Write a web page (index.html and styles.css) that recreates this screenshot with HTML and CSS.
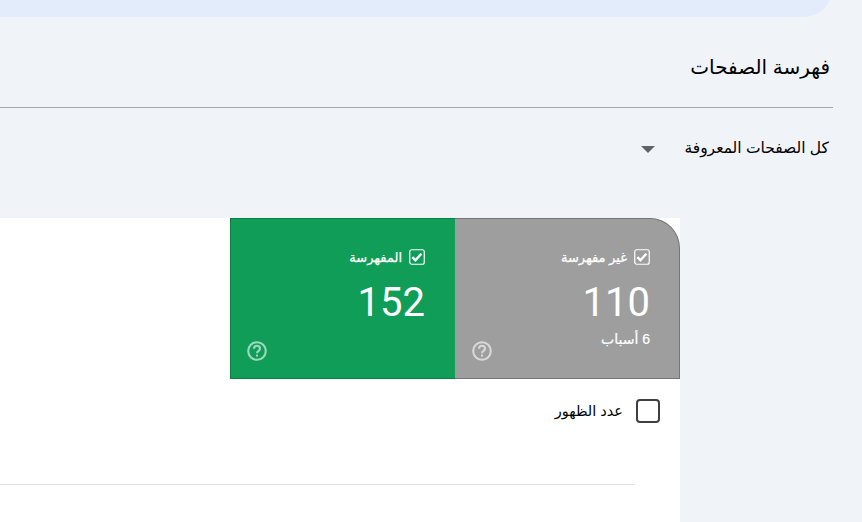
FILE: index.html
```html
<!DOCTYPE html>
<html lang="ar" dir="rtl">
<head>
  <meta charset="UTF-8">
  <meta name="viewport" content="width=device-width, initial-scale=1.0">
  <title>فهرسة الصفحات</title>
  <link rel="stylesheet" href="styles.css">
</head>
<body>

  <div class="page">
    <div class="banner"></div>

    <h1 class="title">فهرسة الصفحات</h1>

    <div class="filter">
      <span class="filter-label">كل الصفحات المعروفة</span>
      <span class="filter-arrow"></span>
    </div>

    <section class="card">
      <div class="tabs">
        <div class="tab tab-gray">
          <div class="tab-head">
            <svg class="tick" viewBox="0 0 16 16"><rect x="0.75" y="0.75" width="14.5" height="14.5" rx="2" fill="none" stroke="currentColor" stroke-width="1.2"/><path d="M3.4 8.2l3 3 6-6.4" fill="none" stroke="currentColor" stroke-width="2.4"/></svg>
            <span>غير مفهرسة</span>
          </div>
          <div class="tab-num">110</div>
          <div class="tab-sub">6 أسباب</div>
          <svg class="help" viewBox="0 0 20 20"><circle cx="10" cy="10" r="8.8" fill="none" stroke="currentColor" stroke-width="2.1"/><path d="M7 7.8a3 3 0 0 1 6 0c0 2-3 2.2-3 4.4" fill="none" stroke="currentColor" stroke-width="2.1"/><rect x="9" y="13.6" width="2" height="2" fill="currentColor"/></svg>
        </div>
        <div class="tab tab-green">
          <div class="tab-head">
            <svg class="tick" viewBox="0 0 16 16"><rect x="0.75" y="0.75" width="14.5" height="14.5" rx="2" fill="none" stroke="currentColor" stroke-width="1.2"/><path d="M3.4 8.2l3 3 6-6.4" fill="none" stroke="currentColor" stroke-width="2.4"/></svg>
            <span>المفهرسة</span>
          </div>
          <div class="tab-num">152</div>
          <svg class="help" viewBox="0 0 20 20"><circle cx="10" cy="10" r="8.8" fill="none" stroke="currentColor" stroke-width="2.1"/><path d="M7 7.8a3 3 0 0 1 6 0c0 2-3 2.2-3 4.4" fill="none" stroke="currentColor" stroke-width="2.1"/><rect x="9" y="13.6" width="2" height="2" fill="currentColor"/></svg>
        </div>
      </div>

      <div class="metric">
        <span class="box"></span>
        <span class="metric-label">عدد الظهور</span>
      </div>
      <div class="rule"></div>
    </section>
  </div>

</body>
</html>
```

FILE: styles.css
```css
* { margin: 0; padding: 0; box-sizing: border-box; }

body {
  font-family: "Liberation Sans", "DejaVu Sans", sans-serif;
  width: 862px;
  height: 522px;
  background: #f0f4f9;
  color: #000;
  overflow: hidden;
}

.page {
  display: flex;
  flex-direction: column;
  height: 522px;
}

.banner {
  width: 832px;
  height: 28px;
  margin-top: -11px;
  margin-right: 30px;
  background: #e3ecfb;
  border-bottom-right-radius: 28px;
  flex: none;
}

.title {
  width: 833px;
  height: 91px;
  margin-right: 29px;
  padding: 36px 3px 0 0;
  font-size: 20px;
  line-height: 28px;
  font-weight: 400;
  border-bottom: 1px solid #a8a8a8;
  flex: none;
}

.filter {
  display: flex;
  align-items: center;
  height: 20px;
  margin-top: 29px;
  margin-right: 33px;
  flex: none;
}

.filter-label {
  width: 174px;
  padding-top: 1px;
  font-size: 15.5px;
  line-height: 20px;
  white-space: nowrap;
}

.filter-arrow {
  width: 0;
  height: 0;
  border-left: 7px solid transparent;
  border-right: 7px solid transparent;
  border-top: 7px solid #5f6368;
  margin-top: 4px;
}

.card {
  width: 680px;
  height: 304px;
  margin-top: 61px;
  margin-right: 182px;
  background: #fff;
  flex: none;
}

.tabs {
  display: flex;
  height: 161px;
}

.tab {
  position: relative;
  width: 225px;
  height: 161px;
  padding: 28px 30px 0 0;
  color: #fff;
}

.tab-gray {
  background: #9e9e9e;
  border: 1px solid #757575;
  border-width: 1px 1px 1px 0;
  border-top-right-radius: 30px;
  padding-right: 29px;
}

.tab-green {
  background: #0f9d58;
  border: 1px solid #0b8043;
  border-right: 0;
}

.tab-head {
  display: flex;
  align-items: center;
  gap: 7px;
  height: 20px;
  font-size: 13px;
  font-weight: 400;
  -webkit-text-stroke: 0.25px #fff;
}

.tick {
  width: 16px;
  height: 16px;
  flex: none;
}

.tab-num {
  margin-top: 13px;
  font-family: Roboto, sans-serif;
  font-size: 40px;
  line-height: 46px;
  direction: ltr;
  text-align: right;
}

.tab-sub {
  margin-top: 4px;
  font-size: 14px;
  line-height: 18px;
  -webkit-text-stroke: 0.2px #fff;
}

.help {
  position: absolute;
  left: 16px;
  bottom: 17px;
  width: 20px;
  height: 20px;
  color: rgba(255, 255, 255, 0.6);
}

.tab-gray .help {
  left: 17px;
}

.metric {
  display: flex;
  align-items: center;
  gap: 13px;
  padding: 20px 20px 0 0;
}

.box {
  width: 24px;
  height: 24px;
  border: 2px solid #3c4043;
  border-radius: 4px;
  flex: none;
}

.metric-label {
  font-size: 14.5px;
  line-height: 20px;
}

.rule {
  width: 635px;
  height: 1px;
  margin-top: 61px;
  margin-right: 45px;
  background: #e0e0e0;
}
```
